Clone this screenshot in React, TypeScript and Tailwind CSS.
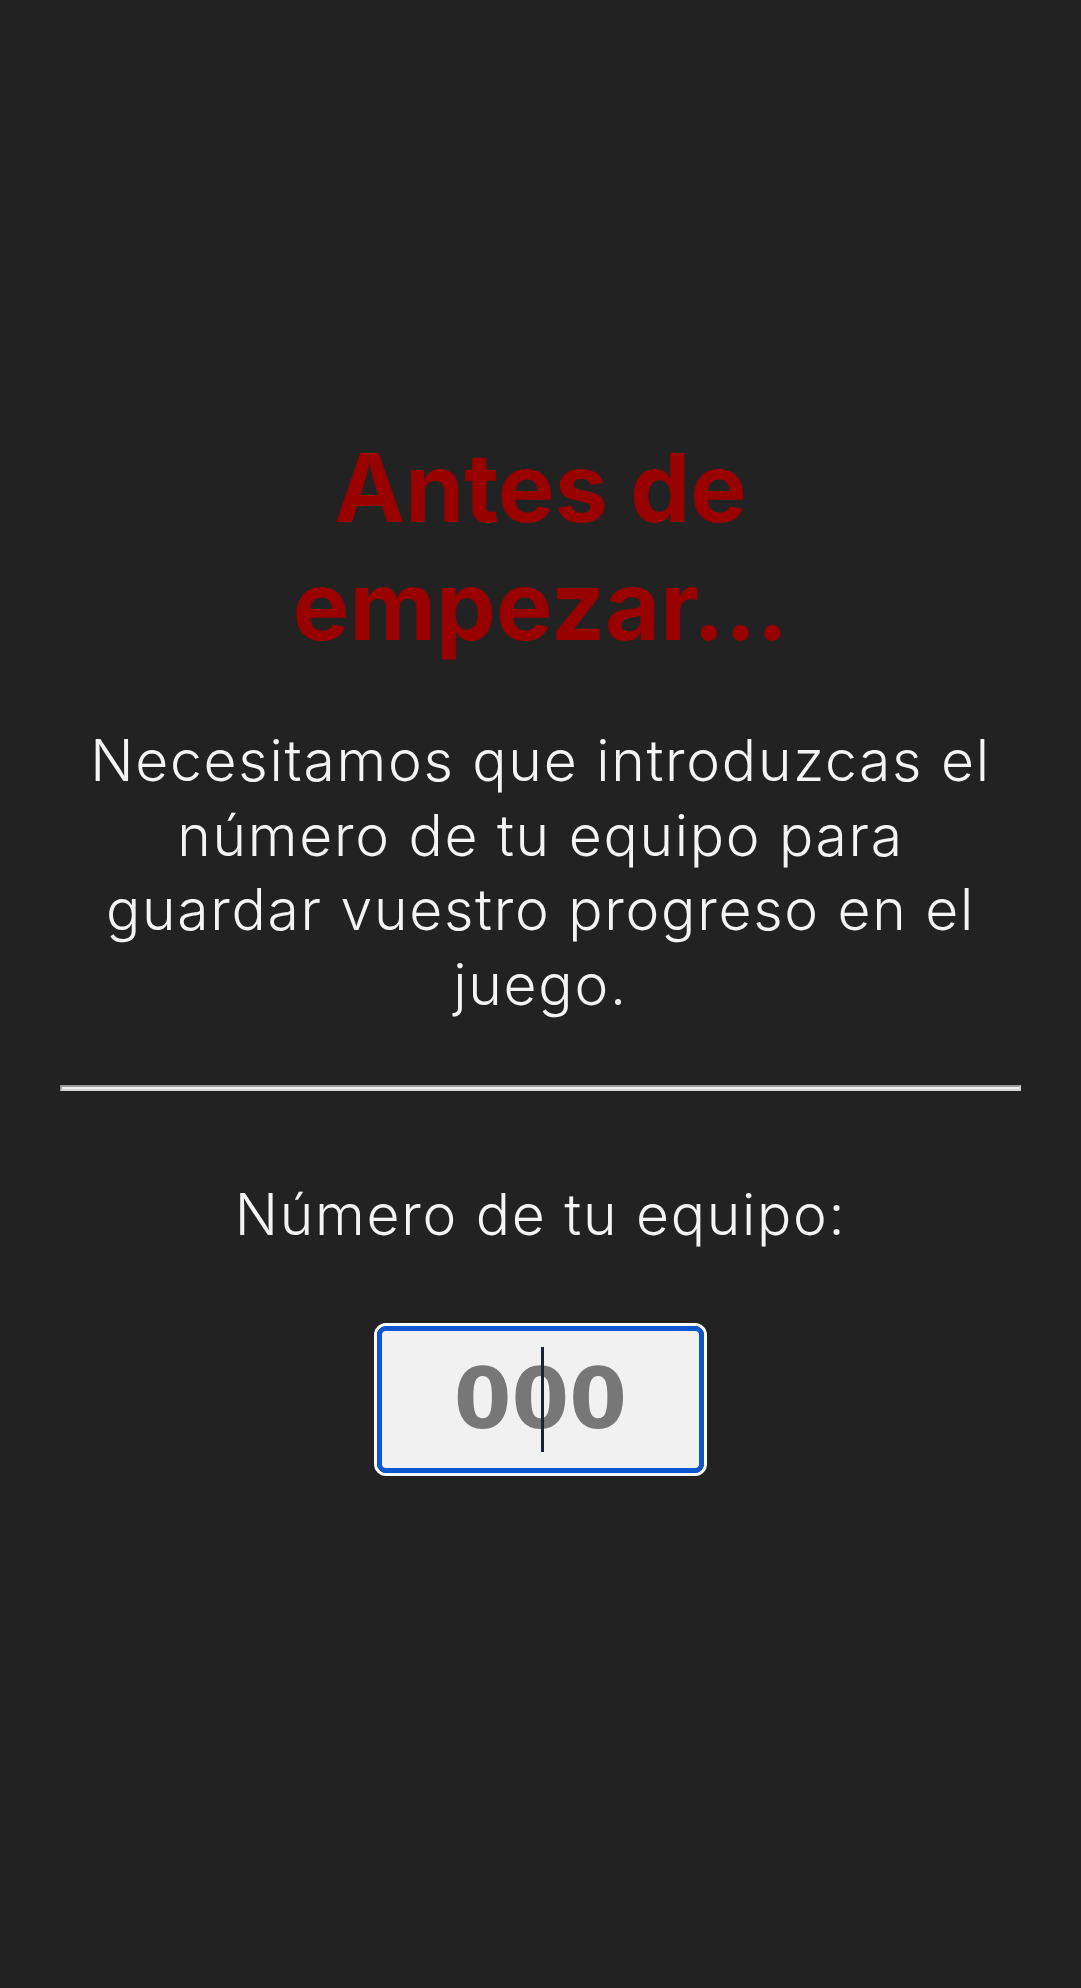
import React from "react";

export default function App() {
  return (
    <div className="w-[1081px] h-[1988px] bg-[#222222] flex flex-col items-center font-['Inter',sans-serif] overflow-hidden">
      <div className="w-[961px] pt-[429px] flex flex-col items-center">
        {/* Title */}
        <h1 className="max-w-[620px] text-center text-[95px] leading-[118px] font-bold text-[#990000]">
          Antes de empezar...
        </h1>

        {/* Intro */}
        <p className="mt-[59px] max-w-[920px] text-center text-[57px] leading-[74.5px] font-light tracking-[0.03em] text-[#f4f4f4]">
          Necesitamos que introduzcas el número de tu equipo para guardar vuestro progreso en el juego.
        </p>

        {/* Divider */}
        <div className="mt-[63px] w-full h-[6px] border-t-2 border-l-2 border-b-2 border-r-2 border-t-[#999999] border-l-[#999999] border-b-[#d4d4d4] border-r-[#d4d4d4] bg-[#f0f0f0]" />

        {/* Team number */}
        <label
          htmlFor="team"
          className="mt-[87px] text-center text-[57px] leading-[74.5px] font-light tracking-[0.03em] text-[#f4f4f4]"
        >
          Número de tu equipo:
        </label>

        <div className="relative mt-[70px] w-[333px] h-[153px] rounded-[12px] border-[3px] border-white">
          <input
            id="team"
            type="text"
            placeholder="000"
            className="w-full h-full rounded-[9px] border-[5px] border-[#0b57d0] bg-[#f1f1f1] text-center font-['DejaVu_Sans',sans-serif] font-bold text-[83px] text-[#333333] placeholder:text-[#777777] outline-none"
          />
          <div className="absolute left-[164px] top-[21px] w-[3px] h-[105px] bg-[#1a2233]" />
        </div>
      </div>
    </div>
  );
}
